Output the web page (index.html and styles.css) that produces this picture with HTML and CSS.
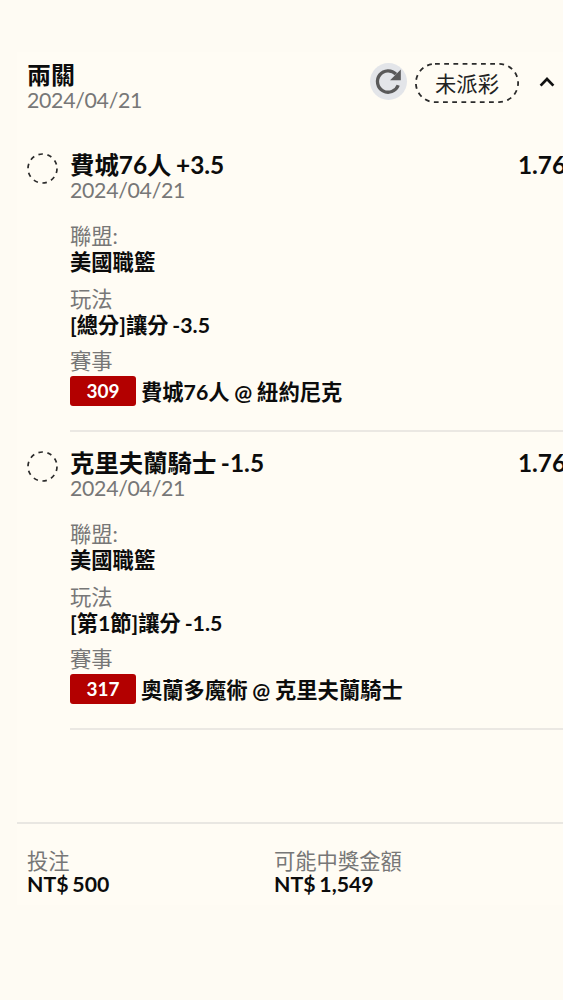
FILE: index.html
```html
<!DOCTYPE html>
<html lang="zh-Hant">
<head>
  <meta charset="UTF-8">
  <meta name="viewport" content="width=device-width, initial-scale=1.0">
  <title>兩關</title>
  <link rel="stylesheet" href="styles.css">
</head>
<body>

  <main class="ticket">
    <!-- Ticket header -->
    <header class="ticket-header">
      <div class="ticket-info">
        <h1 class="ticket-title">兩關</h1>
        <p class="date">2024/04/21</p>
      </div>
      <button class="refresh" aria-label="重新整理">
        <svg width="37" height="37" viewBox="0 0 37 37">
          <path class="arc" d="M26 11.2 A10.7 10.7 0 1 0 28.2 22.2"/>
          <path class="head" d="M30.8 6.6 V17.3 H20.1 Z"/>
        </svg>
      </button>
      <div class="status">
        <svg width="104" height="40" viewBox="0 0 104 40">
          <rect x="0.9" y="0.9" width="102.2" height="38.2" rx="19.1"/>
        </svg>
        <span class="status-text">未派彩</span>
      </div>
      <button class="toggle" aria-label="收合">
        <svg width="16" height="12" viewBox="0 0 16 12">
          <path d="M1.6 9.6 L8 3 L14.4 9.6"/>
        </svg>
      </button>
    </header>

    <!-- First leg -->
    <section class="bet">
      <svg class="bet-state" width="31" height="31" viewBox="0 0 31 31">
        <circle cx="15.5" cy="15.5" r="14.5"/>
      </svg>
      <div class="bet-body">
        <div class="bet-heading">
          <h2 class="bet-title">費城76人 +3.5</h2>
          <span class="odds">1.76</span>
        </div>
        <p class="date">2024/04/21</p>
        <dl class="details">
          <dt>聯盟:</dt>
          <dd>美國職籃</dd>
          <dt>玩法</dt>
          <dd>[總分]讓分 -3.5</dd>
          <dt>賽事</dt>
          <dd class="match"><span class="match-no">309</span><span class="teams">費城76人 @ 紐約尼克</span></dd>
        </dl>
      </div>
    </section>

    <!-- Second leg -->
    <section class="bet">
      <svg class="bet-state" width="31" height="31" viewBox="0 0 31 31">
        <circle cx="15.5" cy="15.5" r="14.5"/>
      </svg>
      <div class="bet-body">
        <div class="bet-heading">
          <h2 class="bet-title">克里夫蘭騎士 -1.5</h2>
          <span class="odds">1.76</span>
        </div>
        <p class="date">2024/04/21</p>
        <dl class="details">
          <dt>聯盟:</dt>
          <dd>美國職籃</dd>
          <dt>玩法</dt>
          <dd>[第1節]讓分 -1.5</dd>
          <dt>賽事</dt>
          <dd class="match"><span class="match-no">317</span><span class="teams">奧蘭多魔術 @ 克里夫蘭騎士</span></dd>
        </dl>
      </div>
    </section>

    <!-- Stake and payout -->
    <footer class="summary">
      <div class="stake">
        <p class="label">投注</p>
        <p class="amount">NT$ 500</p>
      </div>
      <div class="payout">
        <p class="label">可能中獎金額</p>
        <p class="amount">NT$ 1,549</p>
      </div>
    </footer>
  </main>

</body>
</html>
```
FILE: styles.css
```css
* {
  box-sizing: border-box;
}

body {
  margin: 0;
  min-height: 100vh;
  overflow: hidden;
  font-family: Lato, "Noto Sans CJK TC", sans-serif;
  font-size: 21.3px;
  line-height: 26px;
  word-spacing: -1.4px;
  color: #0c0c0c;
  background-color: #fefbf3;
}

h1, h2, p, dl, dd {
  margin: 0;
}

button {
  padding: 0;
  border: none;
  background: none;
}

svg {
  display: block;
  fill: none;
}

.ticket {
  margin: 52px 0 0 17px;
  height: 853px;
  background-color: #fffcf4;
}

/* Header */
.ticket-header {
  display: flex;
  align-items: flex-start;
  height: 82px;
  padding: 10px 8px 0 10px;
}

.ticket-info {
  flex: 1;
}

.ticket-title {
  font-size: 24px;
  line-height: 26px;
  font-weight: 700;
}

.date {
  line-height: 25px;
  letter-spacing: -0.3px;
  color: #777;
}

.refresh {
  width: 37px;
  height: 37px;
  margin: 1px 8px 0 0;
  border-radius: 50%;
  background-color: #e3e5e9;
}

.refresh .arc {
  stroke: #5a5a5a;
  stroke-width: 3.3;
}

.refresh .head {
  fill: #5a5a5a;
}

.status {
  display: grid;
  place-items: center;
  margin-top: 1px;
}

.status > * {
  grid-area: 1 / 1;
}

.status rect {
  stroke: #2b2b2b;
  stroke-width: 1.8;
  stroke-dasharray: 4.8 4.4;
}

.status-text {
  padding-top: 2px;
  color: #222;
}

.toggle {
  margin: 14px 0 0 20px;
}

.toggle path {
  stroke: #111;
  stroke-width: 2.7;
}

/* Legs of the bet */
.bet {
  display: flex;
  height: 298px;
  padding: 18px 0 0 10px;
}

.bet-state {
  flex: none;
  margin: 1px 12px 0 0;
}

.bet-state circle {
  stroke: #2b2b2b;
  stroke-width: 1.7;
  stroke-dasharray: 4.5 4.61;
}

.bet-body {
  flex: 1;
  border-bottom: 2px solid #ebe8e3;
}

.bet-heading {
  display: flex;
  justify-content: space-between;
  font-size: 24.3px;
}

.bet-title {
  font-size: 24.4px;
  line-height: 26px;
  font-weight: 700;
}

.odds {
  margin-right: -3px;
  font-weight: 700;
}

.details {
  margin-top: 20px;
}

.details dt {
  color: #777;
}

.details dd {
  margin-bottom: 10.5px;
  font-weight: 700;
}

.details .match {
  display: flex;
  align-items: center;
  margin: 2px 0 0;
}

.match-no {
  width: 66px;
  margin-right: 5px;
  border-radius: 3px;
  font-size: 19px;
  line-height: 30px;
  text-align: center;
  color: #fff;
  background-color: #b30000;
}

.teams {
  padding-top: 1px;
  word-spacing: -0.4px;
}

/* Totals */
.summary {
  display: flex;
  margin-top: 92px;
  padding: 26px 0 0 10px;
  border-top: 2px solid #e9e7e2;
  line-height: 23px;
}

.stake {
  width: 247px;
}

.label {
  color: #777;
}

.amount {
  font-weight: 700;
}
```
